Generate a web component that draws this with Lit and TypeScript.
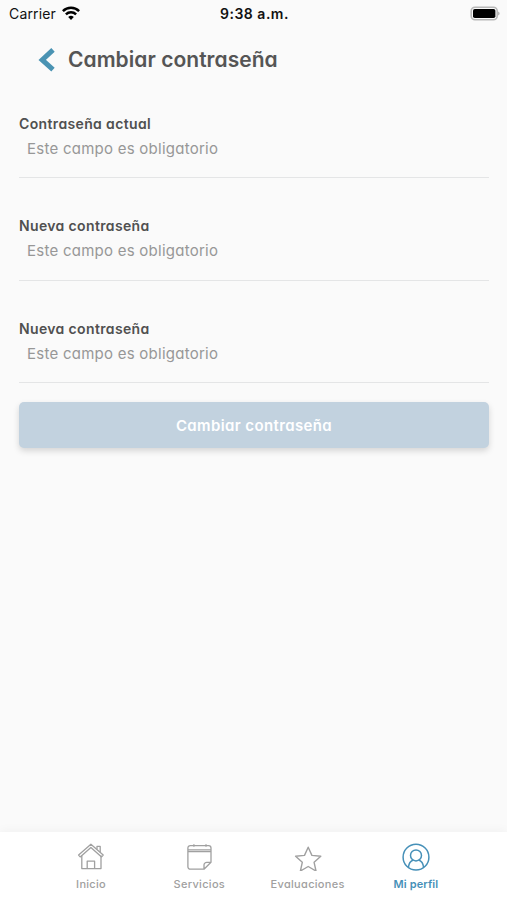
import { LitElement, html, css, svg } from "lit";
import { customElement, property } from "lit/decorators.js";

const icons: Record<string, unknown> = {
  home: svg`<path d="M3.2 13.9 1.6 12 13.9 1.3 26.2 12 24.6 13.9 13.9 4.5Z"/><path d="M4.8 12.6v13H24v-13M20 6.2V3.4h3.2v5.8M10.2 25.6v-7.4h7.4v7.4"/>`,
  calendar: svg`<path d="M26 19.3V5a2.4 2.4 0 0 0-2.4-2.4H5.3A2.4 2.4 0 0 0 2.9 5v18.8a2.4 2.4 0 0 0 2.4 2.4H19l7-6.9h-4.2a2.8 2.8 0 0 0-2.8 2.8v4.1M2.9 6.8H26M2.9 8.7H26M8.9 1.3v2.5M21 1.3v2.5"/>`,
  star: svg`<path d="m14.2 4.2 3.7 8.2 8.9.9-6.7 6 1.9 8.7-7.8-4.5L6.4 28l1.9-8.7-6.7-6 8.9-.9Z" stroke-width="1.4"/>`,
  profile: svg`<g stroke-width="1.5"><circle cx="14" cy="14.2" r="12.9"/><circle cx="14" cy="12.4" r="5.5"/><path d="M6.4 24.3c.5-4.2 2.4-6.4 4.8-7.3M21.6 24.3c-.5-4.2-2.4-6.4-4.8-7.3"/></g>`,
};

@customElement("status-bar")
class StatusBar extends LitElement {
  static styles = css`
    :host { display: grid; grid-template-columns: 1fr auto 1fr; align-items: center; height: 28px; padding: 0 7px 2px 9px; box-sizing: border-box; color: #111; font: 14px "Inter", sans-serif; }
    .carrier { display: flex; align-items: center; gap: 6px; letter-spacing: 0.15px; }
    .wifi { width: 18px; height: 14px; display: block; margin-top: -1px; }
    .time { font-weight: 600; letter-spacing: 0.5px; }
    .battery { width: 30px; height: 15px; justify-self: end; }
  `;
  render() {
    return html`
      <div class="carrier"><span>Carrier</span>
        <svg class="wifi" viewBox="0 0 18 14" fill="none" stroke="#000" stroke-width="2.5">
          <path d="M.9 5.1a11.6 11.6 0 0 1 16.2 0M3.9 8.4a7.3 7.3 0 0 1 10.2 0"/>
          <path d="M9 13.9 6.2 11a4 4 0 0 1 5.6 0Z" fill="#000" stroke="none"/>
        </svg>
      </div>
      <span class="time">9:38 a.m.</span>
      <svg class="battery" viewBox="0 0 30 15">
        <rect x="1.2" y="1.2" width="26" height="12.6" rx="3.8" fill="#fafafa" stroke="#b8b8b8" stroke-width="1.6"/>
        <rect x="3" y="3" width="22.4" height="9" rx="1.8" fill="#000"/>
        <path d="M28.2 5.5c1.8.7 1.8 3.3 0 4Z" fill="#aaa"/>
      </svg>`;
  }
}

@customElement("password-field")
class PasswordField extends LitElement {
  @property() label = "";
  static styles = css`
    :host { display: block; height: 64px; margin-bottom: 38.5px; border-bottom: 1px solid #e4e5e6; box-sizing: border-box; }
    .label { margin-top: -0.5px; font-size: 14px; line-height: 20px; font-weight: 600; color: #505050; letter-spacing: 0.36px; }
    .hint { padding-left: 8px; margin-top: 5px; font-size: 15px; line-height: 20px; color: #979797; letter-spacing: 0.25px; }
  `;
  render() {
    return html`<div class="label">${this.label}</div><div class="hint">Este campo es obligatorio</div>`;
  }
}

@customElement("tab-item")
class TabItem extends LitElement {
  @property() label = "";
  @property() icon = "";
  static styles = css`
    :host { display: flex; flex-direction: column; align-items: center; width: 108.3px; color: #a0a0a0; padding-top: 11px; box-sizing: border-box; }
    :host([active]) { color: #4690b8; }
    svg { width: 28px; height: 28px; fill: none; stroke: currentColor; stroke-width: 1.3; stroke-linejoin: round; }
    .label { font-size: 11px; line-height: 14px; margin-top: 6px; font-weight: 500; white-space: nowrap; letter-spacing: 0.3px; }
    :host([active]) .label { font-weight: 600; letter-spacing: 0.1px; }
  `;
  render() {
    return html`<svg viewBox="0 0 28 28">${icons[this.icon]}</svg><span class="label">${this.label}</span>`;
  }
}

@customElement("app-root")
class AppRoot extends LitElement {
  static styles = css`
    :host { display: flex; flex-direction: column; width: 100%; height: 100vh; background: #fafafa; font-family: "Inter", "Open Sans", sans-serif; font-feature-settings: "cv11" 1; overflow: hidden; }
    header { display: flex; align-items: center; height: 64px; padding-left: 38px; }
    .back { width: 18px; height: 25px; }
    h1 { margin: 0 0 0 12px; font-size: 21px; font-weight: 600; line-height: 30px; color: #555; letter-spacing: 0.04px; }
    main { flex: 1; display: flex; flex-direction: column; padding: 22px 18px 0 19px; }
    .submit { height: 46px; margin-top: -20px; padding: 2px 0 0; border: 0; border-radius: 5px; background: #c2d2df; color: #fff; font: 600 15px "Inter", sans-serif; font-feature-settings: "cv11" 1; box-shadow: 0 3px 6px rgba(0, 0, 0, 0.15); letter-spacing: 0.38px; }
    nav { display: flex; justify-content: center; height: 68px; background: #fff; box-shadow: 0 -1px 10px rgba(0, 0, 0, 0.045); }
  `;
  render() {
    return html`
      <status-bar></status-bar>
      <header>
        <svg class="back" viewBox="0 0 18 25"><path d="M15 1.9 4.2 11.9 15 21.7" fill="none" stroke="#4a93b3" stroke-width="5"/></svg>
        <h1>Cambiar contraseña</h1>
      </header>
      <main>
        <password-field label="Contraseña actual"></password-field>
        <password-field label="Nueva contraseña"></password-field>
        <password-field label="Nueva contraseña"></password-field>
        <button class="submit">Cambiar contraseña</button>
      </main>
      <nav>
        <tab-item icon="home" label="Inicio"></tab-item>
        <tab-item icon="calendar" label="Servicios"></tab-item>
        <tab-item icon="star" label="Evaluaciones"></tab-item>
        <tab-item icon="profile" label="Mi perfil" active></tab-item>
      </nav>`;
  }
}
